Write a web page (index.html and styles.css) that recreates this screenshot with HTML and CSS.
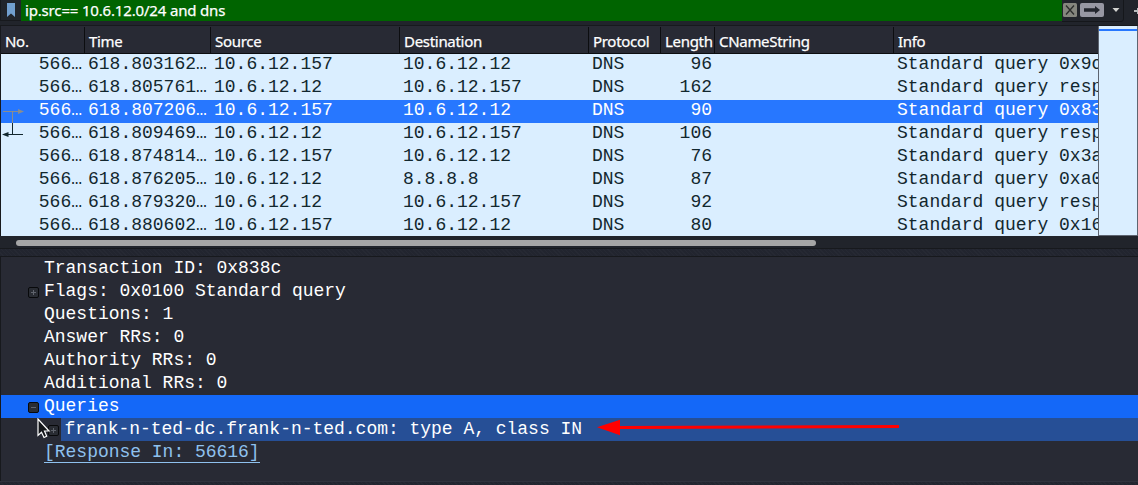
FILE: index.html
```html
<!DOCTYPE html>
<html lang="en">
<head>
<meta charset="utf-8">
<title>Packet capture</title>
<link rel="stylesheet" href="styles.css">
</head>
<body>
<div class="window">
  <div class="filter">
    <div class="bookmark"><svg width="8" height="14" viewBox="0 0 8 14"><path d="M0 0H8V14L4 10.5L0 14Z" fill="#729fcf"/></svg></div>
    <div class="filter-text">ip.src== 10.6.12.0/24 and dns</div>
    <svg class="filter-tools" width="76" height="24" viewBox="0 0 76 24">
      <path d="M0 21.500H59Q61.500 21.500 61.500 19V0" fill="none" stroke="#15171b"/>
      <rect x="1" y="3" width="14" height="14" rx="1.500" fill="#85867e"/>
      <path d="M4 5.500L12 14.500M12 5.500L4 14.500" stroke="#2b2d2c" stroke-width="1.300"/>
      <rect x="18" y="3" width="24" height="14" rx="2" fill="#9797a3"/>
      <path d="M22 8.300H33V6L38 10L33 14V11.700H22Z" fill="#22252d"/>
      <path d="M50.500 8H57.500L54 12Z" fill="#d4d4d2"/>
      <path d="M72 11H76" stroke="#b9bbbd" stroke-width="2"/><path d="M75.500 8V14" stroke="#b9bbbd"/>
    </svg>
  </div>

  <div class="packets">
    <div class="table">
      <div class="row head"><div>No.</div><div>Time</div><div>Source</div><div>Destination</div><div>Protocol</div><div>Length</div><div>CNameString</div><div>Info</div></div>
      <div class="rows">
        <div class="row"><div>566…</div><div>618.803162…</div><div>10.6.12.157</div><div>10.6.12.12</div><div>DNS</div><div>96</div><div></div><div>Standard query 0x9c</div></div>
        <div class="row"><div>566…</div><div>618.805761…</div><div>10.6.12.12</div><div>10.6.12.157</div><div>DNS</div><div>162</div><div></div><div>Standard query resp</div></div>
        <div class="row selected"><div>566…</div><div>618.807206…</div><div>10.6.12.157</div><div>10.6.12.12</div><div>DNS</div><div>90</div><div></div><div>Standard query 0x83</div></div>
        <div class="row"><div>566…</div><div>618.809469…</div><div>10.6.12.12</div><div>10.6.12.157</div><div>DNS</div><div>106</div><div></div><div>Standard query resp</div></div>
        <div class="row"><div>566…</div><div>618.874814…</div><div>10.6.12.157</div><div>10.6.12.12</div><div>DNS</div><div>76</div><div></div><div>Standard query 0x3a</div></div>
        <div class="row"><div>566…</div><div>618.876205…</div><div>10.6.12.12</div><div>8.8.8.8</div><div>DNS</div><div>87</div><div></div><div>Standard query 0xa0</div></div>
        <div class="row"><div>566…</div><div>618.879320…</div><div>10.6.12.12</div><div>10.6.12.157</div><div>DNS</div><div>92</div><div></div><div>Standard query resp</div></div>
        <div class="row"><div>566…</div><div>618.880602…</div><div>10.6.12.157</div><div>10.6.12.12</div><div>DNS</div><div>80</div><div></div><div>Standard query 0x16</div></div>
        <svg class="related" width="26" height="46" viewBox="0 0 26 46">
          <path d="M2 11.500H18M11.500 11.500V23" fill="none" stroke="#8a8d90"/><path d="M17 9L23 11.500L17 14Z" fill="#8a8d90"/>
          <path d="M11.500 23V34.500M22 34.500H6" fill="none" stroke="#12272e"/><path d="M7.500 32L1 34.500L7.500 37Z" fill="#12272e"/>
        </svg>
      </div>
    </div>
    <div class="minimap"></div>
  </div>

  <div class="scroll"><div class="thumb"></div></div>
  <div class="splitter"></div>

  <div class="details">
    <div class="line">Transaction ID: 0x838c</div>
    <div class="line"><span class="toggle plus"></span>Flags: 0x0100 Standard query</div>
    <div class="line">Questions: 1</div>
    <div class="line">Answer RRs: 0</div>
    <div class="line">Authority RRs: 0</div>
    <div class="line">Additional RRs: 0</div>
    <div class="line current"><span class="toggle"></span>Queries</div>
    <div class="line child"><span class="toggle plus"></span><div class="child-text">frank-n-ted-dc.frank-n-ted.com: type A, class IN</div></div>
    <div class="line"><span class="link">[Response In: 56616]</span></div>
    <svg class="pointer" width="14" height="22" viewBox="0 0 14 22"><path d="M1 1V17.500L4.500 14.300L7 19.500L9.700 18.200L7.500 13H12Z" fill="#15171b" stroke="#fff" stroke-width="1.200"/></svg>
    <svg class="arrow" width="304" height="18" viewBox="0 0 304 18"><path d="M22 9.500L302 8.500" stroke="#f00" stroke-width="3"/><path d="M0 9.300L23 1.700V17.200Z" fill="#f00"/></svg>
  </div>
  <div class="footer"></div>
</div>
</body>
</html>
```
FILE: styles.css
```css
* { box-sizing: border-box; }
body { margin: 0; background: #21242b; }
.window {
  display: flex;
  flex-direction: column;
  width: 1138px;
  height: 485px;
  overflow: hidden;
  background: #21242b;
  color: #fff;
  font: 15px/20px "Noto Sans", sans-serif;
}
.filter { display: flex; height: 26px; border-bottom: 1px solid #17191d; }
.bookmark { width: 21px; height: 21px; padding: 3px 0 0 6px; border: solid #17191d; border-width: 0 0 1px 1px; }
.bookmark svg { display: block; }
.filter-text {
  width: 1041px;
  height: 21px;
  padding-left: 4px;
  background: #006400;
  letter-spacing: -0.17px;
  white-space: pre;
  -webkit-text-stroke: 0.25px #fff;
}
.filter-tools { display: block; }

.packets { display: flex; height: 210px; }
.table { width: 1098px; overflow: hidden; border-left: 1px solid #17191d; }
.row { display: grid; grid-template-columns: 84px 126px 189px 189px 72px 54px 179px 204px; height: 23px; }
.row > div { padding-left: 4px; white-space: pre; overflow: hidden; }
.head {
  height: 28px;
  padding-top: 1px;
  background: #282a34;
  border-bottom: 1px solid #0c0d10;
  letter-spacing: -0.3px;
  -webkit-text-stroke: 0.25px #fff;
}
.head > div { padding-top: 4px; border-right: 1px solid #0c0d10; }
.head > div:last-child { border-right: 0; }
.rows {
  position: relative;
  height: 182px;
  overflow: hidden;
  background: #daeeff;
  color: #12272e;
  font: 18px/20px "Liberation Mono", monospace;
}
.rows .row > div { padding-left: 3px; }
.rows .row > div:nth-child(6) { padding: 0 3px 0 0; text-align: right; }
.rows .row > div:first-child { padding: 0 3px 0 0; text-align: right; }
.selected { background: #2777ff; color: #fff; }
.related { position: absolute; left: 0; top: 46px; }
.minimap {
  width: 40px;
  border: 1px solid #5d6470;
  border-top: 0;
  background: linear-gradient(#daeeff 3px, #2777ff 3px, #2777ff 5px, #daeeff 5px);
}

.scroll { height: 12px; padding: 4px 0 0 16px; background: #21242b; }
.thumb { width: 800px; height: 6px; border-radius: 3px; background: #a6a6a6; }
.splitter {
  height: 9px;
  border-top: 1px solid #17191d;
  border-bottom: 1px solid #17191d;
  background: repeating-linear-gradient(45deg, #22252f 0 2px, #262933 2px 3px);
}

.details {
  position: relative;
  height: 224px;
  border-left: 1px solid #17191d;
  background: #282a34;
  font: 18px/20px "Liberation Mono", monospace;
  letter-spacing: -0.02px;
}
.line { display: flex; height: 23px; padding: 1px 0 0 43px; white-space: pre; }
.toggle {
  width: 11px;
  height: 11px;
  margin: 6px 5px 0 -16px;
  border: 1px solid #08090b;
  border-radius: 2px;
  background: linear-gradient(#60646d, #60646d) center / 5px 1px no-repeat, #292c33;
}
.toggle.plus {
  background: linear-gradient(#60646d, #60646d) center / 5px 1px no-repeat, linear-gradient(#60646d, #60646d) center / 1px 5px no-repeat, #292c33;
}
.current { background: #1468f8; }
.child { padding: 0 0 0 47px; }
.child .toggle { margin: 7px 2px 0 0; }
.child-text { flex: 1; padding: 1px 0 0 3.5px; background: #264f96; }
.link { height: 21px; color: #8fc1ee; border-bottom: 1px solid #8fc1ee; }
.pointer { position: absolute; left: 36px; top: 161px; }
.arrow { position: absolute; left: 596px; top: 161px; }
.footer { flex: 1; border-top: 1px solid #30323d; background: repeating-linear-gradient(45deg, #22252f 0 2px, #262933 2px 3px); }
```
